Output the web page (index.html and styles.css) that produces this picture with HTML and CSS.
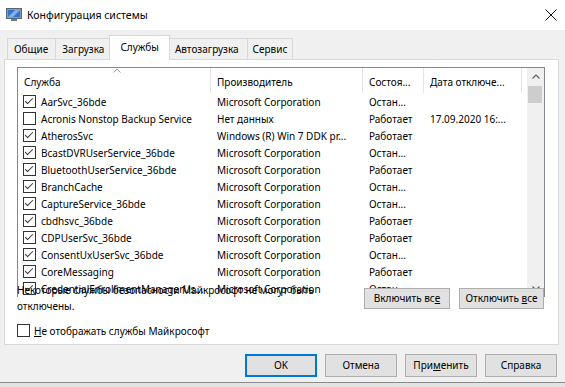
FILE: index.html
```html
<!DOCTYPE html>
<html lang="ru">
<head>
    <meta charset="UTF-8">
    <meta name="viewport" content="width=device-width, initial-scale=1.0">
    <title>Конфигурация системы</title>
    <link rel="stylesheet" href="styles.css">
</head>
<body>
<div class="window">
    <div class="titlebar">
        <svg class="app-icon" width="16" height="14" viewBox="0 0 16 14">
            <rect x="0.5" y="0.5" width="15" height="10" fill="#8d9aa8" stroke="#5b6672"/>
            <rect x="2" y="2" width="12" height="7" fill="#2f74c8"/>
            <path d="M2 9 L9 2 H14 L7 9 Z" fill="#7fb1e8"/>
            <rect x="5" y="11" width="6" height="2" fill="#6f7b88"/>
        </svg>
        <span class="title">Конфигурация системы</span>
        <svg class="close" width="12" height="12" viewBox="0 0 12 12">
            <path d="M0.5 0.5 L11.5 11.5 M11.5 0.5 L0.5 11.5" stroke="#111" stroke-width="1"/>
        </svg>
    </div>

    <div class="tabs">
        <div class="tab">Общие</div>
        <div class="tab">Загрузка</div>
        <div class="tab active">Службы</div>
        <div class="tab">Автозагрузка</div>
        <div class="tab">Сервис</div>
    </div>

    <div class="panel">
        <div class="list">
            <div class="grid">
                <div class="head">
                    <div class="hcell first">Служба
                        <svg class="sort" width="8" height="5" viewBox="0 0 8 5"><path d="M0.5 4.5 L4 1 L7.5 4.5" fill="none" stroke="#9a9a9a"/></svg>
                    </div>
                    <div class="hcell">Производитель</div>
                    <div class="hcell">Состоя...</div>
                    <div class="hcell">Дата отключе...</div>
                    <div class="hcell last"></div>
                </div>
                <div class="row"><div class="cell name"><span class="cb on"></span>AarSvc_36bde</div><div class="cell">Microsoft Corporation</div><div class="cell">Остан...</div><div class="cell"></div></div>
                <div class="row"><div class="cell name"><span class="cb"></span>Acronis Nonstop Backup Service</div><div class="cell">Нет данных</div><div class="cell">Работает</div><div class="cell">17.09.2020 16:...</div></div>
                <div class="row"><div class="cell name"><span class="cb on"></span>AtherosSvc</div><div class="cell">Windows (R) Win 7 DDK pr...</div><div class="cell">Работает</div><div class="cell"></div></div>
                <div class="row"><div class="cell name"><span class="cb on"></span>BcastDVRUserService_36bde</div><div class="cell">Microsoft Corporation</div><div class="cell">Остан...</div><div class="cell"></div></div>
                <div class="row"><div class="cell name"><span class="cb on"></span>BluetoothUserService_36bde</div><div class="cell">Microsoft Corporation</div><div class="cell">Работает</div><div class="cell"></div></div>
                <div class="row"><div class="cell name"><span class="cb on"></span>BranchCache</div><div class="cell">Microsoft Corporation</div><div class="cell">Остан...</div><div class="cell"></div></div>
                <div class="row"><div class="cell name"><span class="cb on"></span>CaptureService_36bde</div><div class="cell">Microsoft Corporation</div><div class="cell">Остан...</div><div class="cell"></div></div>
                <div class="row"><div class="cell name"><span class="cb on"></span>cbdhsvc_36bde</div><div class="cell">Microsoft Corporation</div><div class="cell">Работает</div><div class="cell"></div></div>
                <div class="row"><div class="cell name"><span class="cb on"></span>CDPUserSvc_36bde</div><div class="cell">Microsoft Corporation</div><div class="cell">Работает</div><div class="cell"></div></div>
                <div class="row"><div class="cell name"><span class="cb on"></span>ConsentUxUserSvc_36bde</div><div class="cell">Microsoft Corporation</div><div class="cell">Остан...</div><div class="cell"></div></div>
                <div class="row"><div class="cell name"><span class="cb on"></span>CoreMessaging</div><div class="cell">Microsoft Corporation</div><div class="cell">Работает</div><div class="cell"></div></div>
                <div class="row"><div class="cell name"><span class="cb on"></span>CredentialEnrollmentManagerUs...</div><div class="cell">Microsoft Corporation</div><div class="cell">Остан...</div><div class="cell"></div></div>
            </div>
            <div class="scrollbar">
                <div class="sb-btn">
                    <svg width="8" height="5" viewBox="0 0 8 5"><path d="M0.5 4.5 L4 1 L7.5 4.5" fill="none" stroke="#606060" stroke-width="1.2"/></svg>
                </div>
                <div class="thumb"></div>
                <div class="track"></div>
                <div class="sb-btn">
                    <svg width="8" height="5" viewBox="0 0 8 5"><path d="M0.5 0.5 L4 4 L7.5 0.5" fill="none" stroke="#606060" stroke-width="1.2"/></svg>
                </div>
            </div>
        </div>

        <div class="notes">
            <p class="note">Некоторые службы безопасности Майкрософт не могут быть отключены.</p>
            <div class="toggles">
                <div class="btn small">Включить вс<u>е</u></div>
                <div class="btn small second">Отключить <u>в</u>се</div>
            </div>
        </div>

        <div class="hide-ms"><span class="cb"></span><span><u>Н</u>е отображать службы Майкрософт</span></div>
    </div>

    <div class="footer">
        <div class="btn default">OK</div>
        <div class="btn">Отмена</div>
        <div class="btn">При<u>м</u>енить</div>
        <div class="btn">Справка</div>
    </div>
    <div class="bottom-edge"></div>
</div>
</body>
</html>
```

FILE: styles.css
```css
body {
    margin: 0;
    background-color: #e3e3e3;
    font-family: "Noto Sans", "Liberation Sans", sans-serif;
    font-size: 10px;
    color: #000;
}
.window {
    width: 565px;
    height: 387px;
    background-color: #f0f0f0;
    display: flex;
    flex-direction: column;
    overflow: hidden;
}
.titlebar {
    height: 30px;
    flex: none;
    background-color: #fff;
    display: flex;
    align-items: center;
    padding: 0 8px 0 6px;
}
.app-icon {
    margin-right: 5px;
}
.title {
    flex: 1;
    font-size: 10.5px;
}

/* tabs */
.tabs {
    height: 29px;
    flex: none;
    display: flex;
    align-items: flex-end;
    padding-left: 8px;
    position: relative;
    z-index: 1;
}
.tab {
    height: 21px;
    line-height: 20px;
    box-sizing: border-box;
    padding: 0 7px 0 6px;
    border: 1px solid #d9d9d9;
    border-bottom: none;
    margin-left: -1px;
    background-color: #f0f0f0;
}
.tab:nth-child(4) {
    padding: 0 8px 0 7px;
}
.tab:nth-child(5) {
    padding: 0 5px;
}
.tab.active {
    height: 25px;
    line-height: 22px;
    padding: 0 10px;
    margin: 0 -2px -1px -3px;
    background-color: #fff;
    position: relative;
}

/* panel */
.panel {
    height: 286px;
    flex: none;
    box-sizing: border-box;
    margin: 0 6px 0 4px;
    padding: 7px 13px 0 12px;
    background-color: #fff;
    border: 1px solid #d9d9d9;
}
.list {
    height: 230px;
    box-sizing: border-box;
    border: 1px solid #828790;
    border-bottom: none;
    display: flex;
    overflow: hidden;
}
.grid {
    flex: 1;
    min-width: 0;
}
.head, .row {
    display: grid;
    grid-template-columns: 193px 152px 61px 98px 1fr;
}
.head {
    height: 25px;
}
.hcell {
    border-right: 1px solid #e5e5e5;
    padding: 7px 0 0 6px;
    line-height: 14px;
    white-space: nowrap;
    overflow: hidden;
}
.hcell.first {
    position: relative;
}
.hcell.last {
    border-right: none;
}
.sort {
    position: absolute;
    left: 95px;
    top: 0;
}
.row {
    height: 17px;
    align-items: center;
}
.cell {
    padding-left: 6px;
    white-space: nowrap;
    overflow: hidden;
}
.cell.name {
    padding-left: 5px;
    display: flex;
    align-items: center;
}
.cb {
    width: 13px;
    height: 13px;
    box-sizing: border-box;
    border: 1px solid #333;
    background-color: #fff;
    margin-right: 5px;
    flex: none;
    position: relative;
}
.cb.on::after {
    content: "";
    position: absolute;
    left: 3px;
    top: 0px;
    width: 3px;
    height: 7px;
    border: solid #333;
    border-width: 0 1px 1px 0;
    transform: rotate(45deg);
}

/* scrollbar */
.scrollbar {
    width: 17px;
    flex: none;
    background-color: #f0f0f0;
    display: flex;
    flex-direction: column;
}
.sb-btn {
    height: 17px;
    display: flex;
    align-items: center;
    justify-content: center;
}
.thumb {
    height: 17px;
    margin: 1px 2px 0 1px;
    background-color: #cdcdcd;
}
.track {
    flex: 1;
}

/* note and toggle buttons, drawn over the list */
.notes {
    display: flex;
    align-items: flex-start;
    margin-top: -15px;
    position: relative;
}
.note {
    margin: 0;
    width: 330px;
    line-height: 16px;
}
.toggles {
    display: flex;
    gap: 9px;
    margin: 6px 1px 0 auto;
}
.btn {
    box-sizing: border-box;
    background-color: #e1e1e1;
    border: 1px solid #adadad;
    text-align: center;
    white-space: nowrap;
}
.btn.small {
    height: 21px;
    width: 86px;
    line-height: 19px;
}
.btn.small.second {
    width: 85px;
}
.hide-ms {
    display: flex;
    align-items: center;
    height: 17px;
    margin-top: 8px;
}
.hide-ms .cb {
    margin-right: 4px;
}

/* footer */
.footer {
    height: 37px;
    flex: none;
    box-sizing: border-box;
    display: flex;
    justify-content: flex-end;
    align-items: flex-start;
    gap: 8px;
    padding: 9px 8px 0 0;
}
.footer .btn {
    width: 72px;
    height: 23px;
    line-height: 21px;
}
.btn.default {
    border-color: #0078d7;
    box-shadow: inset 0 0 0 1px #0078d7;
}
.bottom-edge {
    flex: 1;
    border-top: 1px solid #8a8a8a;
    background-color: #e3e3e3;
}
```
